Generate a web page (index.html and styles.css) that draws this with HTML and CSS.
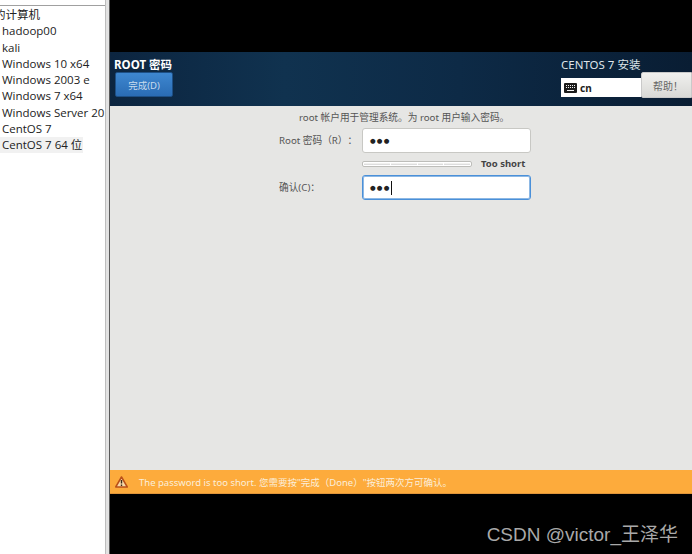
FILE: index.html
```html
<!DOCTYPE html>
<html lang="zh">
<head>
<meta charset="utf-8">
<title>ROOT 密码</title>
<link rel="stylesheet" href="styles.css">
</head>
<body>
<div class="app">
  <aside class="side">
    <ul class="vm-list">
      <li class="vm cut"><span>的计算机</span></li>
      <li class="vm">hadoop00</li>
      <li class="vm">kali</li>
      <li class="vm">Windows 10 x64</li>
      <li class="vm">Windows 2003 e</li>
      <li class="vm">Windows 7 x64</li>
      <li class="vm">Windows Server 20</li>
      <li class="vm">CentOS 7</li>
      <li class="vm sel">CentOS 7 64 位</li>
    </ul>
  </aside>
  <div class="gutter"></div>
  <main class="vm-screen">
    <header class="hdr">
      <div class="hdr-left">
        <div class="spoke">ROOT 密码</div>
        <button class="done">完成(D)</button>
      </div>
      <div class="hdr-right">
        <div class="product">CENTOS 7 安装</div>
        <div class="hdr-tools">
          <div class="kbd">
            <svg class="kbd-icon" width="13" height="10" viewBox="0 0 13 10"><rect width="13" height="10" rx="1" fill="#1c1c1c"/><path d="M2 2.5h1M4 2.5h1M6 2.5h1M8 2.5h1M10 2.5h1M2 4.5h1M4 4.5h1M6 4.5h1M8 4.5h1M10 4.5h1M3 7.5h7" stroke="#f2f2f2" stroke-width="1"/></svg>
            <span>cn</span>
          </div>
          <button class="help">帮助！</button>
        </div>
      </div>
    </header>
    <section class="content">
      <p class="intro">root 帐户用于管理系统。为 root 用户输入密码。</p>
      <div class="form">
        <label class="lbl">Root 密码（R）：</label>
        <div class="input"><span class="dots">●●●</span></div>
        <div class="meter-row">
          <div class="meter"><i></i><i></i><i></i><i></i></div>
          <span class="strength">Too short</span>
        </div>
        <label class="lbl lbl2">确认(C)：</label>
        <div class="input focus"><span class="dots">●●●</span><span class="caret"></span></div>
      </div>
    </section>
    <div class="warn">
      <svg class="warn-icon" width="13" height="12" viewBox="0 0 13 12"><path d="M6.5 1 12.3 11H.7Z" fill="#f7d9a8" stroke="#b9501a" stroke-width="1.5" stroke-linejoin="round"/><path d="M6.5 4v3.6M6.5 8.6v1.4" stroke="#3a2a1a" stroke-width="1.4"/></svg>
      <span>The password is too short. 您需要按"完成（Done）"按钮两次方可确认。</span>
    </div>
    <div class="mark">CSDN @victor_王泽华</div>
  </main>
</div>
</body>
</html>
```
FILE: styles.css
```css
* { box-sizing: border-box; }
html, body { margin: 0; padding: 0; }
body {
  width: 692px;
  height: 554px;
  overflow: hidden;
  background: #fff;
  font-family: "Liberation Sans", "Noto Sans CJK SC", sans-serif;
  text-spacing-trim: space-all;
}
.app { display: flex; height: 554px; }
.side {
  width: 105px;
  padding-top: 5px;
  background: #fff;
  overflow: hidden;
  flex: none;
}
.vm-list {
  list-style: none;
  margin: 0;
  padding: 1px 0 0;
  border-top: 1px solid #a0a0a0;
  font-family: "Open Sans", "Noto Sans CJK SC", sans-serif;
  font-size: 11.5px;
  color: #222;
}
.vm { height: 16.25px; line-height: 16px; padding-left: 2px; white-space: nowrap; }
.vm.cut { overflow: hidden; padding-left: 0; }
.vm.cut span { margin-left: -6px; }
.vm.sel { background: #f1f1f1; width: 83px; }
.gutter {
  width: 5px;
  flex: none;
  background: #e2e2e2;
  border-right: 1px solid #5a5a5a;
  border-left: 1px solid #bdbdbd;
}
.vm-screen {
  position: relative;
  flex: 1;
  display: flex;
  flex-direction: column;
  background: #000;
  padding-top: 52px;
  font-family: "Noto Sans", "Noto Sans CJK SC", sans-serif;
}
.hdr {
  height: 54px;
  display: flex;
  justify-content: space-between;
  padding: 5px 0 0 4px;
  background: linear-gradient(90deg, #0c2540 0%, #10324f 30%, #0d2a46 60%, #091d33 100%);
  color: #fff;
  flex: none;
}
.spoke { font-size: 11.5px; font-weight: 700; line-height: 15px; height: 15px; }
.done {
  display: block;
  width: 58px;
  height: 25px;
  margin: 0 0 0 1px;
  padding: 0;
  border: 1px solid #1d4f85;
  border-radius: 2px;
  background: linear-gradient(#3e87d0, #2a6cb4);
  color: #c9dcee;
  font: inherit;
  font-size: 9.5px;
}
.hdr-right { width: 131px; }
.product { font-size: 11.5px; line-height: 14px; padding-top: 1px; height: 15px; color: #dfe5ea; }
.hdr-tools { display: flex; height: 26px; }
.kbd {
  width: 80px;
  height: 19px;
  margin-top: 6px;
  display: flex;
  align-items: center;
  gap: 3px;
  padding-left: 3px;
  background: #fff;
  color: #222;
  font-size: 10px;
  font-weight: 700;
}
.help {
  width: 51px;
  height: 26px;
  padding: 0 0 0 3px;
  border: 1px solid #c9c9c9;
  border-radius: 2px 0 0 2px;
  background: linear-gradient(#f0f0ee, #d9d9d6);
  color: #666;
  font: inherit;
  font-size: 10px;
}
.content {
  height: 364px;
  background: #e6e6e4;
  flex: none;
  font-size: 9.7px;
  color: #555;
}
.intro { margin: 0; padding: 5px 0 0 189px; line-height: 13px; height: 22px; white-space: nowrap; }
.form {
  display: grid;
  grid-template-columns: 83px 169px;
  margin-left: 169px;
  align-items: center;
}
.lbl { line-height: 25px; white-space: nowrap; font-size: 9.7px; }
.input {
  height: 25px;
  display: flex;
  align-items: center;
  padding-left: 7px;
  background: #fff;
  border: 1px solid #c8c8c4;
  border-radius: 3px;
  color: #222;
}
.dots { font-size: 6.5px; letter-spacing: 1.2px; font-family: "DejaVu Sans", sans-serif; }
.input.focus { border: 1px solid #4a90d9; box-shadow: 0 0 0 1px #8db8e4 inset; }
.caret { width: 1px; height: 14px; background: #111; }
.meter-row {
  grid-column: 2;
  height: 22px;
  display: flex;
  align-items: center;
  gap: 9px;
  white-space: nowrap;
}
.meter {
  width: 110px;
  height: 6px;
  flex: none;
  display: flex;
  gap: 1px;
  padding: 1px;
  background: #fff;
  border: 1px solid #bdbdb9;
  border-radius: 2px;
}
.meter i { flex: 1; background: #f1f1ef; border-bottom: 1px solid #ddd; }
.strength { font-size: 9.5px; font-weight: 700; color: #444; line-height: 20px; margin-top: -1px; }
.warn {
  height: 24px;
  flex: none;
  display: flex;
  align-items: center;
  gap: 11px;
  padding-left: 5px;
  background: #fdab3c;
  border-bottom: 1px solid #e0953a;
  color: #fbeeda;
  font-size: 9.5px;
}
.warn-icon { flex: none; }
.mark {
  position: absolute;
  right: 14px;
  top: 523px;
  font-family: "Liberation Sans", "Noto Sans CJK SC", sans-serif;
  font-size: 19px;
  line-height: 24px;
  color: #a9a9a9;
  white-space: nowrap;
}
```
